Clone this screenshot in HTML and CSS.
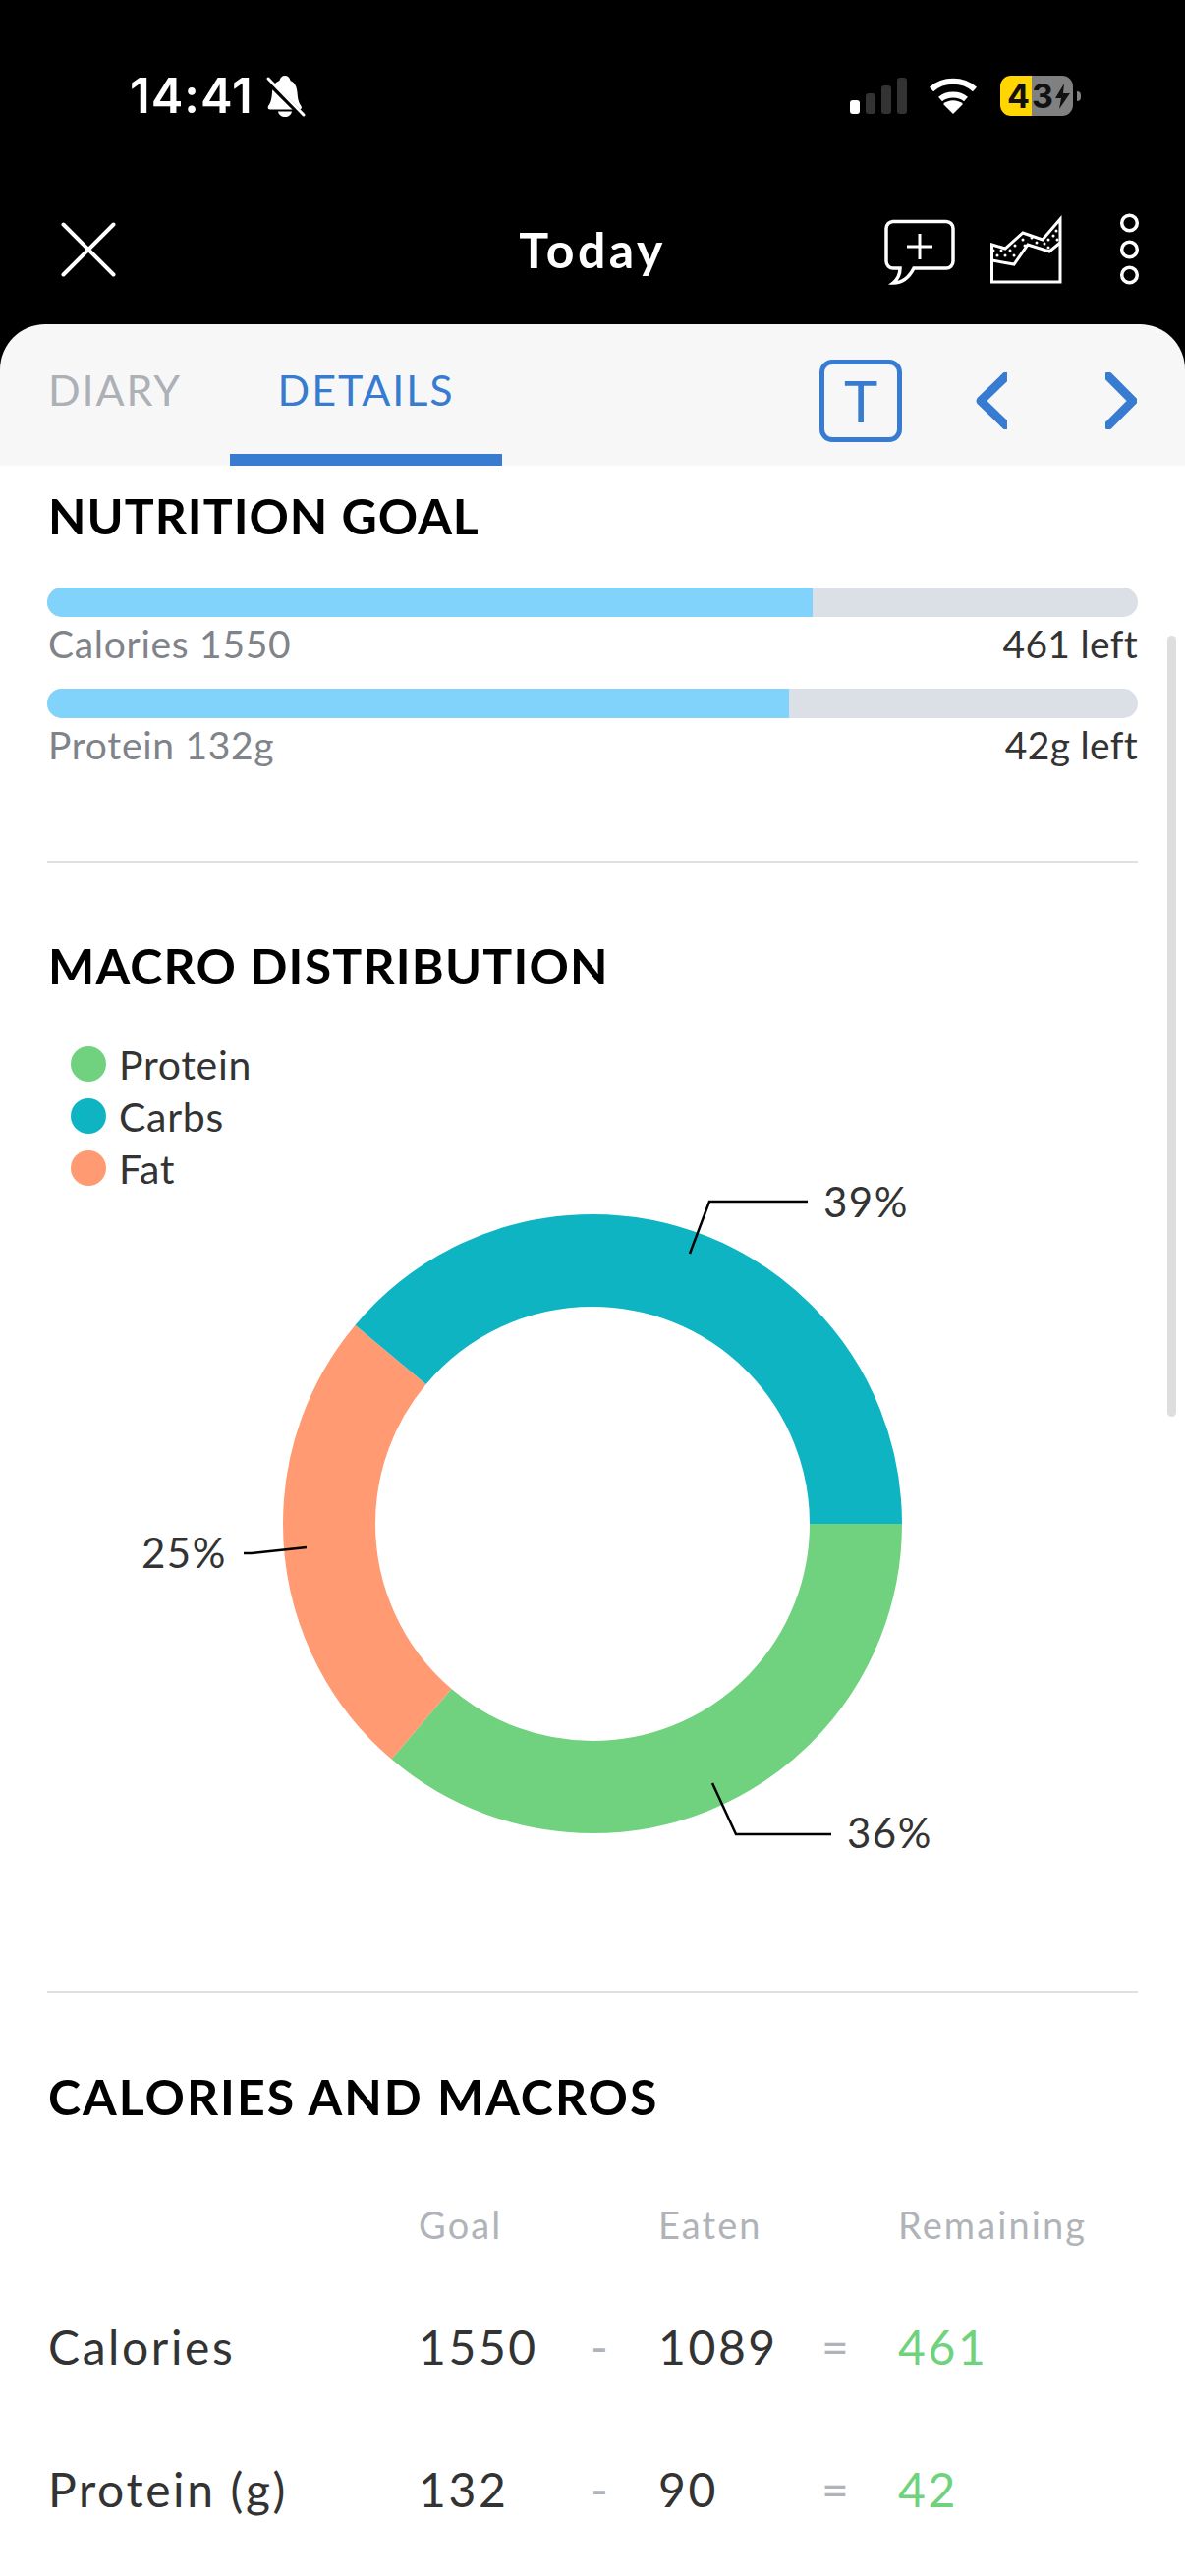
FILE: index.html
```html
<!DOCTYPE html>
<html lang="en">
<head>
<meta charset="UTF-8">
<meta name="viewport" content="width=device-width, initial-scale=1">
<title>Today</title>
<link rel="stylesheet" href="styles.css">
</head>
<body>

  <header class="top">
    <div class="status">
      <span class="time">14:41</span>
      <svg class="bell" viewBox="268 76 44 44">
        <path d="M290 77c3 0 5 2 5.500 5 5 2 6.500 7 7 12 .5 6 1 10 4 14 1 2 0 3.500-2 3.500H275c-2 0-3-1.500-2-3.500 3-4 3.500-8 4-14 .5-5 2-10 7.500-12 .5-3 2.500-5 5.500-5z" fill="#fff"/>
        <path d="M283 113.500h14c-.5 3.500-3.500 5.500-7 5.500s-6.500-2-7-5.500z" fill="#fff"/>
        <path d="M268 78l40 40" stroke="#000" stroke-width="6"/>
        <path d="M273 80l36 37" stroke="#fff" stroke-width="3" stroke-linecap="round"/>
      </svg>
      <div class="status-right">
        <svg class="signal" viewBox="865 77 60 41">
          <rect x="865" y="102" width="10" height="14" rx="3" fill="#fff"/>
          <rect x="881" y="95" width="10" height="21" rx="3" fill="#333"/>
          <rect x="897" y="87" width="10" height="29" rx="3" fill="#333"/>
          <rect x="913" y="79" width="10" height="37" rx="3" fill="#333"/>
        </svg>
        <svg class="wifi" viewBox="943 77 54 41">
          <path d="M948 91c12-11 32-11 44 0M957 101c7-6 19-6 26 0" fill="none" stroke="#fff" stroke-width="6"/>
          <path d="M970 116l-10-10c5-5 15-5 20 0z" fill="#fff"/>
        </svg>
        <div class="battery">
          <div class="batt-body">
            <span class="batt-fill">4</span>
            <span class="batt-rest">3
              <svg class="bolt" viewBox="0 0 15 26"><path d="M9 0L0 15h6l-2 11 11-16H8z" fill="#111"/></svg>
            </span>
          </div>
          <span class="batt-nub"></span>
        </div>
      </div>
    </div>

    <nav class="nav">
      <svg class="nav-close" viewBox="61 216 58 71">
        <path d="M64.500 226.500l51 51M115.500 226.500l-51 51" stroke="#fff" stroke-width="4" stroke-linecap="round"/>
      </svg>
      <h1 class="nav-title">Today</h1>
      <div class="nav-icons">
        <svg class="nav-chat" viewBox="898 216 76 71">
          <path d="M908 223.500h55a7 7 0 0 1 7 7V264a7 7 0 0 1-7 7h-33c-4 8-11 15-21 15 5-4 7-9 7-15h-7a7 7 0 0 1-7-7v-33.500a7 7 0 0 1 7-7z" fill="none" stroke="#fff" stroke-width="3.500"/>
          <path d="M923 249h26M936 236v26" stroke="#fff" stroke-width="3"/>
        </svg>
        <svg class="nav-chart" viewBox="1008 216 72 71">
          <path d="M1009.500 247l13.500 4 18-16 20 7 18-21v64h-69.500z" fill="none" stroke="#fff" stroke-width="3"/>
          <path d="M1009.500 263l22.500 4 14-20 22 7 11-9" fill="none" stroke="#fff" stroke-width="3"/>
          <g fill="#fff">
            <circle cx="1011" cy="253" r="1.500"/><circle cx="1019" cy="253" r="1.500"/><circle cx="1028" cy="253" r="1.500"/>
            <circle cx="1015" cy="258" r="1.500"/><circle cx="1023" cy="258" r="1.500"/><circle cx="1032" cy="258" r="1.500"/>
            <circle cx="1033" cy="248" r="1.500"/><circle cx="1041" cy="242" r="1.500"/><circle cx="1043" cy="248" r="1.500"/>
            <circle cx="1050" cy="240" r="1.500"/><circle cx="1055" cy="245" r="1.500"/><circle cx="1063" cy="246" r="1.500"/>
            <circle cx="1067" cy="242" r="1.500"/><circle cx="1072" cy="238" r="1.500"/><circle cx="1075" cy="233" r="1.500"/>
            <circle cx="1076" cy="242" r="1.500"/><circle cx="1067" cy="250" r="1.500"/>
          </g>
        </svg>
        <svg class="nav-more" viewBox="1138 216 23 71">
          <g fill="none" stroke="#fff" stroke-width="3.500">
            <circle cx="1149.500" cy="225" r="7.800"/>
            <circle cx="1149.500" cy="252" r="7.800"/>
            <circle cx="1149.500" cy="278" r="7.800"/>
          </g>
        </svg>
      </div>
    </nav>
  </header>

  <div class="tabs">
    <a class="tab tab-diary">DIARY</a>
    <a class="tab tab-details">DETAILS</a>
    <div class="tab-actions">
      <span class="text-btn">T</span>
      <svg class="chev chev-left" viewBox="0 0 32 58"><path d="M36-1L5 29l31 30" fill="none" stroke="#377cd0" stroke-width="9" stroke-linejoin="round"/></svg>
      <svg class="chev" viewBox="0 0 32 58"><path d="M3 4l25 25L3 54" fill="none" stroke="#377cd0" stroke-width="9" stroke-linecap="round"/></svg>
    </div>
  </div>

  <main class="content">
    <section class="goals">
      <h2>NUTRITION GOAL</h2>
      <div class="goal">
        <div class="bar"><div class="bar-fill" style="width:70.2%"></div></div>
        <div class="goal-label"><span>Calories 1550</span><span class="left">461 left</span></div>
      </div>
      <div class="goal">
        <div class="bar"><div class="bar-fill" style="width:68%"></div></div>
        <div class="goal-label"><span>Protein 132g</span><span class="left">42g left</span></div>
      </div>
    </section>

    <section class="macros">
      <h2>MACRO DISTRIBUTION</h2>
      <ul class="legend">
        <li><span class="dot green"></span>Protein</li>
        <li><span class="dot teal"></span>Carbs</li>
        <li><span class="dot orange"></span>Fat</li>
      </ul>
      <svg class="donut" viewBox="48 1207 1110 821">
        <g fill="none" stroke-width="94">
          <circle cx="603" cy="1551" r="268" pathLength="100" stroke="#70d27e" stroke-dasharray="36.250 63.750"/>
          <circle cx="603" cy="1551" r="268" pathLength="100" stroke="#ff9a72" stroke-dasharray="24.850 75.150" stroke-dashoffset="-36.250"/>
          <circle cx="603" cy="1551" r="268" pathLength="100" stroke="#0fb4c3" stroke-dasharray="38.900 61.100" stroke-dashoffset="-61.100"/>
        </g>
        <g fill="none" stroke="#000" stroke-width="2.500">
          <path d="M702 1276l20-53h100"/>
          <path d="M312 1575l-56 6h-8"/>
          <path d="M725 1815l24 52h97"/>
        </g>
        <g class="donut-label">
          <text x="838" y="1239">39%</text>
          <text x="144" y="1596">25%</text>
          <text x="862" y="1881">36%</text>
        </g>
      </svg>
    </section>

    <section class="totals">
      <h2>CALORIES AND MACROS</h2>
      <div class="row head"><span></span><span>Goal</span><span></span><span>Eaten</span><span></span><span>Remaining</span></div>
      <div class="row"><span>Calories</span><span>1550</span><span class="op">-</span><span>1089</span><span class="op">=</span><span class="rem">461</span></div>
      <div class="row"><span>Protein (g)</span><span>132</span><span class="op">-</span><span>90</span><span class="op">=</span><span class="rem">42</span></div>
    </section>
  </main>

  <div class="scrollbar"></div>

</body>
</html>
```

FILE: styles.css
```css
* { box-sizing: border-box; }
html, body { margin: 0; padding: 0; }
body { position: relative; width: 1206px; height: 2622px; overflow: hidden; background: #000; color: #333; font-family: Lato, "Noto Sans", sans-serif; }
svg { display: block; flex: none; overflow: visible; }

/* black header */
.top { background: #000; color: #fff; height: 376px; margin-bottom: -46px; padding-top: 77px; }
.status { display: flex; align-items: center; height: 41px; padding: 0 106px 0 132px; }
.time { width: 122px; font-family: Inter, sans-serif; font-weight: 600; font-size: 49px; line-height: 41px; letter-spacing: 1px; white-space: nowrap; }
.bell { width: 44px; height: 44px; margin-left: 14px; }
.status-right { display: flex; align-items: center; margin-left: auto; }
.signal { width: 60px; height: 41px; }
.wifi { width: 54px; height: 41px; margin-left: 18px; }
.battery { display: flex; align-items: center; margin-left: 21px; }
.batt-body { display: flex; width: 74px; height: 41px; color: #111; font-family: Inter, sans-serif; font-weight: 700; font-size: 34px; line-height: 41px; }
.batt-fill { width: 32px; background: #ffd600; padding-left: 7px; border-radius: 11px 0 0 11px; }
.batt-rest { display: flex; align-items: center; flex: 1; background: #808080; border-radius: 0 11px 11px 0; }
.bolt { width: 15px; height: 26px; margin-left: 2px; }
.batt-nub { width: 4px; height: 10px; margin-left: 4px; background: #808080; border-radius: 0 5px 5px 0; }

.nav { display: grid; grid-template-columns: 1fr auto 1fr; align-items: center; padding: 98px 45px 0; height: 212px; align-content: start; }
.nav-close { width: 58px; height: 71px; margin-left: 16px; }
.nav-title { margin: 3px 0 0; font-size: 50px; line-height: 71px; font-weight: 700; letter-spacing: 3.500px; }
.nav-icons { display: flex; justify-content: flex-end; }
.nav-chat { width: 76px; height: 71px; }
.nav-chart { width: 72px; height: 71px; margin-left: 34px; }
.nav-more { width: 23px; height: 71px; margin-left: 58px; }

/* tab bar */
.tabs { display: flex; height: 144px; background: #f7f7f7; border-radius: 46px 46px 0 0; position: relative; }
.tab { display: block; height: 144px; padding-top: 45px; font-size: 43px; line-height: 44px; letter-spacing: 1.900px; text-align: center; }
.tab-diary { width: 234px; padding-left: 49px; text-align: left; color: #adb0b6; }
.tab-details { width: 277px; color: #377cd0; border-bottom: 12px solid #377cd0; }
.tab-actions { display: flex; align-items: center; margin-left: auto; padding: 12px 49px 0 0; }
.text-btn { width: 84px; height: 84px; border: 5px solid #377cd0; border-radius: 13px; color: #377cd0; font-size: 58px; line-height: 74px; text-align: center; }
.chev { width: 32px; height: 58px; margin-left: 100px; overflow: hidden; }
.chev-left { margin-left: 75px; }

/* main */
.content { background: #fff; height: 2148px; padding: 21px 48px 0; }
h2 { margin: 0; color: #000; font-size: 50px; line-height: 60px; font-weight: 700; padding-left: 1px; }

.goals { height: 383px; border-bottom: 2px solid #e0e0e0; }
.goals h2 { margin-bottom: 43px; letter-spacing: 1px; }
.goal { margin-bottom: 26px; }
.bar { height: 30px; border-radius: 15px; background: #dbdfe6; overflow: hidden; }
.bar-fill { height: 100%; background: #82d3fb; }
.goal-label { display: flex; justify-content: space-between; margin-top: 7px; padding-left: 1px; font-size: 39px; line-height: 40px; letter-spacing: .7px; color: #7f838a; }
.goal-label .left { color: #333; letter-spacing: .3px; }

.macros { padding-top: 75px; border-bottom: 2px solid #e0e0e0; height: 1151px; }
.macros h2 { letter-spacing: 1.200px; }
.legend { list-style: none; margin: 52px 0 0; padding: 0 0 0 24px; font-size: 41px; letter-spacing: .7px; }
.legend li { display: flex; align-items: center; height: 36px; margin-bottom: 17px; }
.legend li:last-child { margin-bottom: 0; }
.dot { width: 36px; height: 36px; border-radius: 50%; margin-right: 13px; }
.green { background: #70d27e; }
.teal { background: #0fb4c3; }
.orange { background: #ff9a72; }
.donut { width: 1110px; height: 821px; }
.donut-label { font-size: 42px; letter-spacing: 1.500px; fill: #333; }

.totals { padding-top: 75px; }
.totals h2 { letter-spacing: 2px; }
.row { display: grid; grid-template-columns: 377px 175px 69px 166px 78px 1fr; margin-top: 85px; padding-left: 1px; font-size: 48px; line-height: 60px; letter-spacing: 2.600px; }
.row.head { margin-top: 75px; font-size: 38px; line-height: 50px; letter-spacing: 2.100px; color: #b0b3b8; }
.row.head + .row { margin-top: 70px; }
.op { color: #b0b3b8; }
.rem { color: #6fd27d; }

.scrollbar { position: absolute; top: 647px; right: 9px; width: 9px; height: 795px; border-radius: 5px; background: #dedede; }
```
